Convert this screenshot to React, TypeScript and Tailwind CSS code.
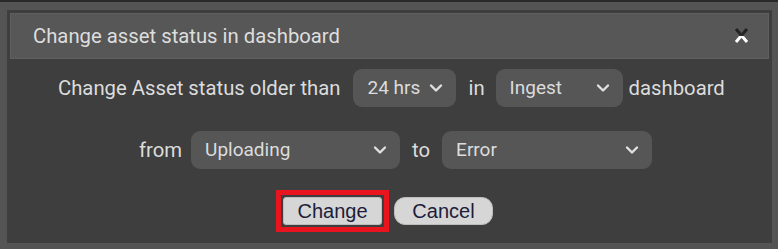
import React from "react";

function Chevron() {
  return (
    <svg width="14" height="10" viewBox="0 0 14 10" className="shrink-0">
      <path d="M2 2.5 L7 7.5 L12 2.5" fill="none" stroke="#e0e0e0" strokeWidth="2.4" strokeLinecap="round" strokeLinejoin="round" />
    </svg>
  );
}

function Select({ label, width }: { label: string; width: string }) {
  return (
    <div className={`${width} h-[38px] rounded-[9px] bg-[#565656] flex items-center justify-between pl-[14px] pr-[13px] text-[19px] text-[#dcdcdc]`}>
      <span>{label}</span>
      <Chevron />
    </div>
  );
}

export default function App() {
  return (
    <div className="w-[778px] h-[249px] bg-[#545454] relative overflow-hidden" style={{ fontFamily: "Roboto, 'Liberation Sans', sans-serif" }}>
      <div className="h-[2px] bg-[#2a2a2a]" />
      <div className="absolute left-[7px] top-[10px] w-[765px] h-[233px] bg-[#3e3e3e] flex flex-col">
        <div className="mx-[3px] mt-[3px] h-[46px] bg-[#575757] border border-[#5f5f5f] flex items-center justify-between pl-[22px] pr-[19px]">
          <span className="text-[20.3px] text-[#dedede]">Change asset status in dashboard</span>
          <svg width="15" height="15" viewBox="0 0 15 15" className="-mt-[1px]">
            <defs>
              <linearGradient id="xg" x1="0" y1="0" x2="0" y2="1">
                <stop offset="0" stopColor="#1e1e1e" />
                <stop offset="0.5" stopColor="#2a2a2a" />
                <stop offset="0.55" stopColor="#ffffff" />
                <stop offset="1" stopColor="#ffffff" />
              </linearGradient>
            </defs>
            <path d="M2 1 L13 14 M13 1 L2 14" stroke="url(#xg)" strokeWidth="3" fill="none" />
          </svg>
        </div>
        <div className="flex items-center pl-[51px] mt-[10px] text-[20.3px] text-[#dcdcdc]">
          <span>Change Asset status older than</span>
          <div className="ml-[13px]"><Select label="24 hrs" width="w-[103px]" /></div>
          <span className="ml-[12px]">in</span>
          <div className="ml-[11px]"><Select label="Ingest" width="w-[127px]" /></div>
          <span className="ml-[6px]">dashboard</span>
        </div>
        <div className="flex items-center pl-[132px] mt-[24px] text-[20.3px] text-[#dcdcdc]">
          <span>from</span>
          <div className="ml-[9px]"><Select label="Uploading" width="w-[209px]" /></div>
          <span className="ml-[12px]">to</span>
          <div className="ml-[12px]"><Select label="Error" width="w-[210px]" /></div>
        </div>
        <div className="flex items-center pl-[269px] gap-[5px] mt-[21px]" style={{ fontFamily: "'Liberation Sans', Arial, sans-serif" }}>
          <div className="border-[5px] border-[#e8141e] p-[2px]">
            <div className="w-[99px] h-[28px] bg-[#d6d6d6] rounded-[3px] border border-[#bdbdbd] flex items-center justify-center text-[20px] text-[#1c1c3a]">Change</div>
          </div>
          <div className="w-[99px] h-[28px] bg-[#d6d6d6] rounded-[11px] border border-[#bdbdbd] flex items-center justify-center text-[20px] text-[#1c1c3a]">Cancel</div>
        </div>
      </div>
    </div>
  );
}
